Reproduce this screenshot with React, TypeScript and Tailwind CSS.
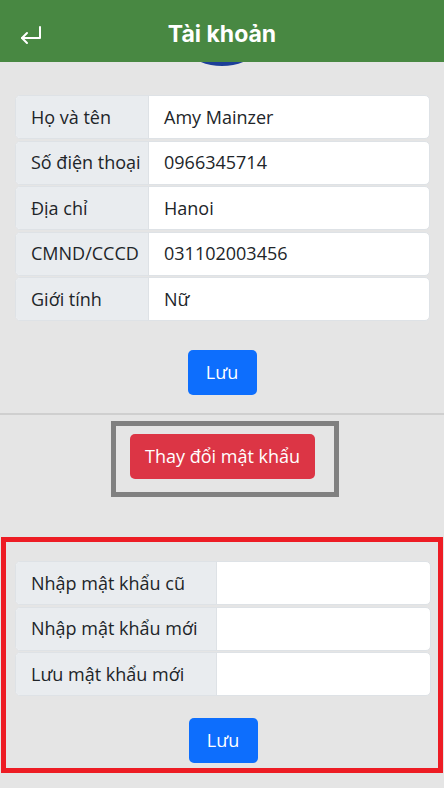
const infoRows = [
  { label: "Họ và tên", value: "Amy Mainzer" },
  { label: "Số điện thoại", value: "0966345714" },
  { label: "Địa chỉ", value: "Hanoi" },
  { label: "CMND/CCCD", value: "031102003456" },
  { label: "Giới tính", value: "Nữ" },
];

const passwordRows = ["Nhập mật khẩu cũ", "Nhập mật khẩu mới", "Lưu mật khẩu mới"];

const font = { fontFamily: '"Open Sans", "Noto Sans", sans-serif' };

const FieldRow = ({ label, value, labelWidth }: { label: string; value?: string; labelWidth: string }) => (
  <div className="flex h-[44px] rounded-[5px] border border-[#dee2e6] overflow-hidden bg-white">
    <div className={`${labelWidth} shrink-0 flex items-center pl-[15px] bg-[#e9ecef] border-r border-[#dee2e6] text-[18px] text-[#212529] whitespace-nowrap`}>
      {label}
    </div>
    <div className="flex-1 flex items-center pl-[15px] text-[18px] text-[#212529]">{value}</div>
  </div>
);

const SaveButton = () => (
  <button className="w-[69px] h-[45px] rounded-[5px] bg-[#0d6efd] text-white text-[18px]">Lưu</button>
);

export default function App() {
  return (
    <div className="w-[444px] h-[788px] bg-[#e5e5e5] overflow-hidden relative" style={font}>
      <div className="absolute left-[165px] top-[-48px] w-[114px] h-[114px] rounded-full bg-[#1c3f98]" />
      <header className="relative z-10 h-[62px] bg-[#488842] flex items-center justify-center">
        <svg className="absolute left-[19px] top-[25px]" width="24" height="20" viewBox="0 0 24 20" fill="none" stroke="white" strokeWidth="2" strokeLinecap="round" strokeLinejoin="round">
          <path d="M21 2v11H3" />
          <polyline points="8,8 3,13 8,18" />
        </svg>
        <h1 className="text-white text-[23px] font-bold mt-[6px]" style={{ fontFamily: "Inter, sans-serif" }}>
          Tài khoản
        </h1>
      </header>

      <div className="pt-[33px] pl-[15px] pr-[14px] flex flex-col gap-[1.5px]">
        {infoRows.map((r) => (
          <FieldRow key={r.label} label={r.label} value={r.value} labelWidth="w-[133px]" />
        ))}
      </div>

      <div className="flex justify-center mt-[29px]">
        <SaveButton />
      </div>

      <div className="mt-[18px] h-[2px] bg-[#cfcfcf]" />

      <div className="flex justify-center mt-[6px]">
        <div className="ml-[6px] border-[5px] border-[#808080] pt-[8px] pb-[13px] pl-[14px] pr-[19px]">
          <button className="w-[185px] h-[45px] rounded-[5px] bg-[#dc3545] text-white text-[18px]">Thay đổi mật khẩu</button>
        </div>
      </div>

      <div className="mt-[40px] mx-[1px] h-[236px] border-[5px] border-[#ed1c24] pt-[19px] pl-[9px] pr-[7px]">
        <div className="flex flex-col gap-[1.5px]">
          {passwordRows.map((l) => (
            <FieldRow key={l} label={l} labelWidth="w-[201px]" />
          ))}
        </div>
        <div className="flex justify-center mt-[22px]">
          <SaveButton />
        </div>
      </div>
    </div>
  );
}
